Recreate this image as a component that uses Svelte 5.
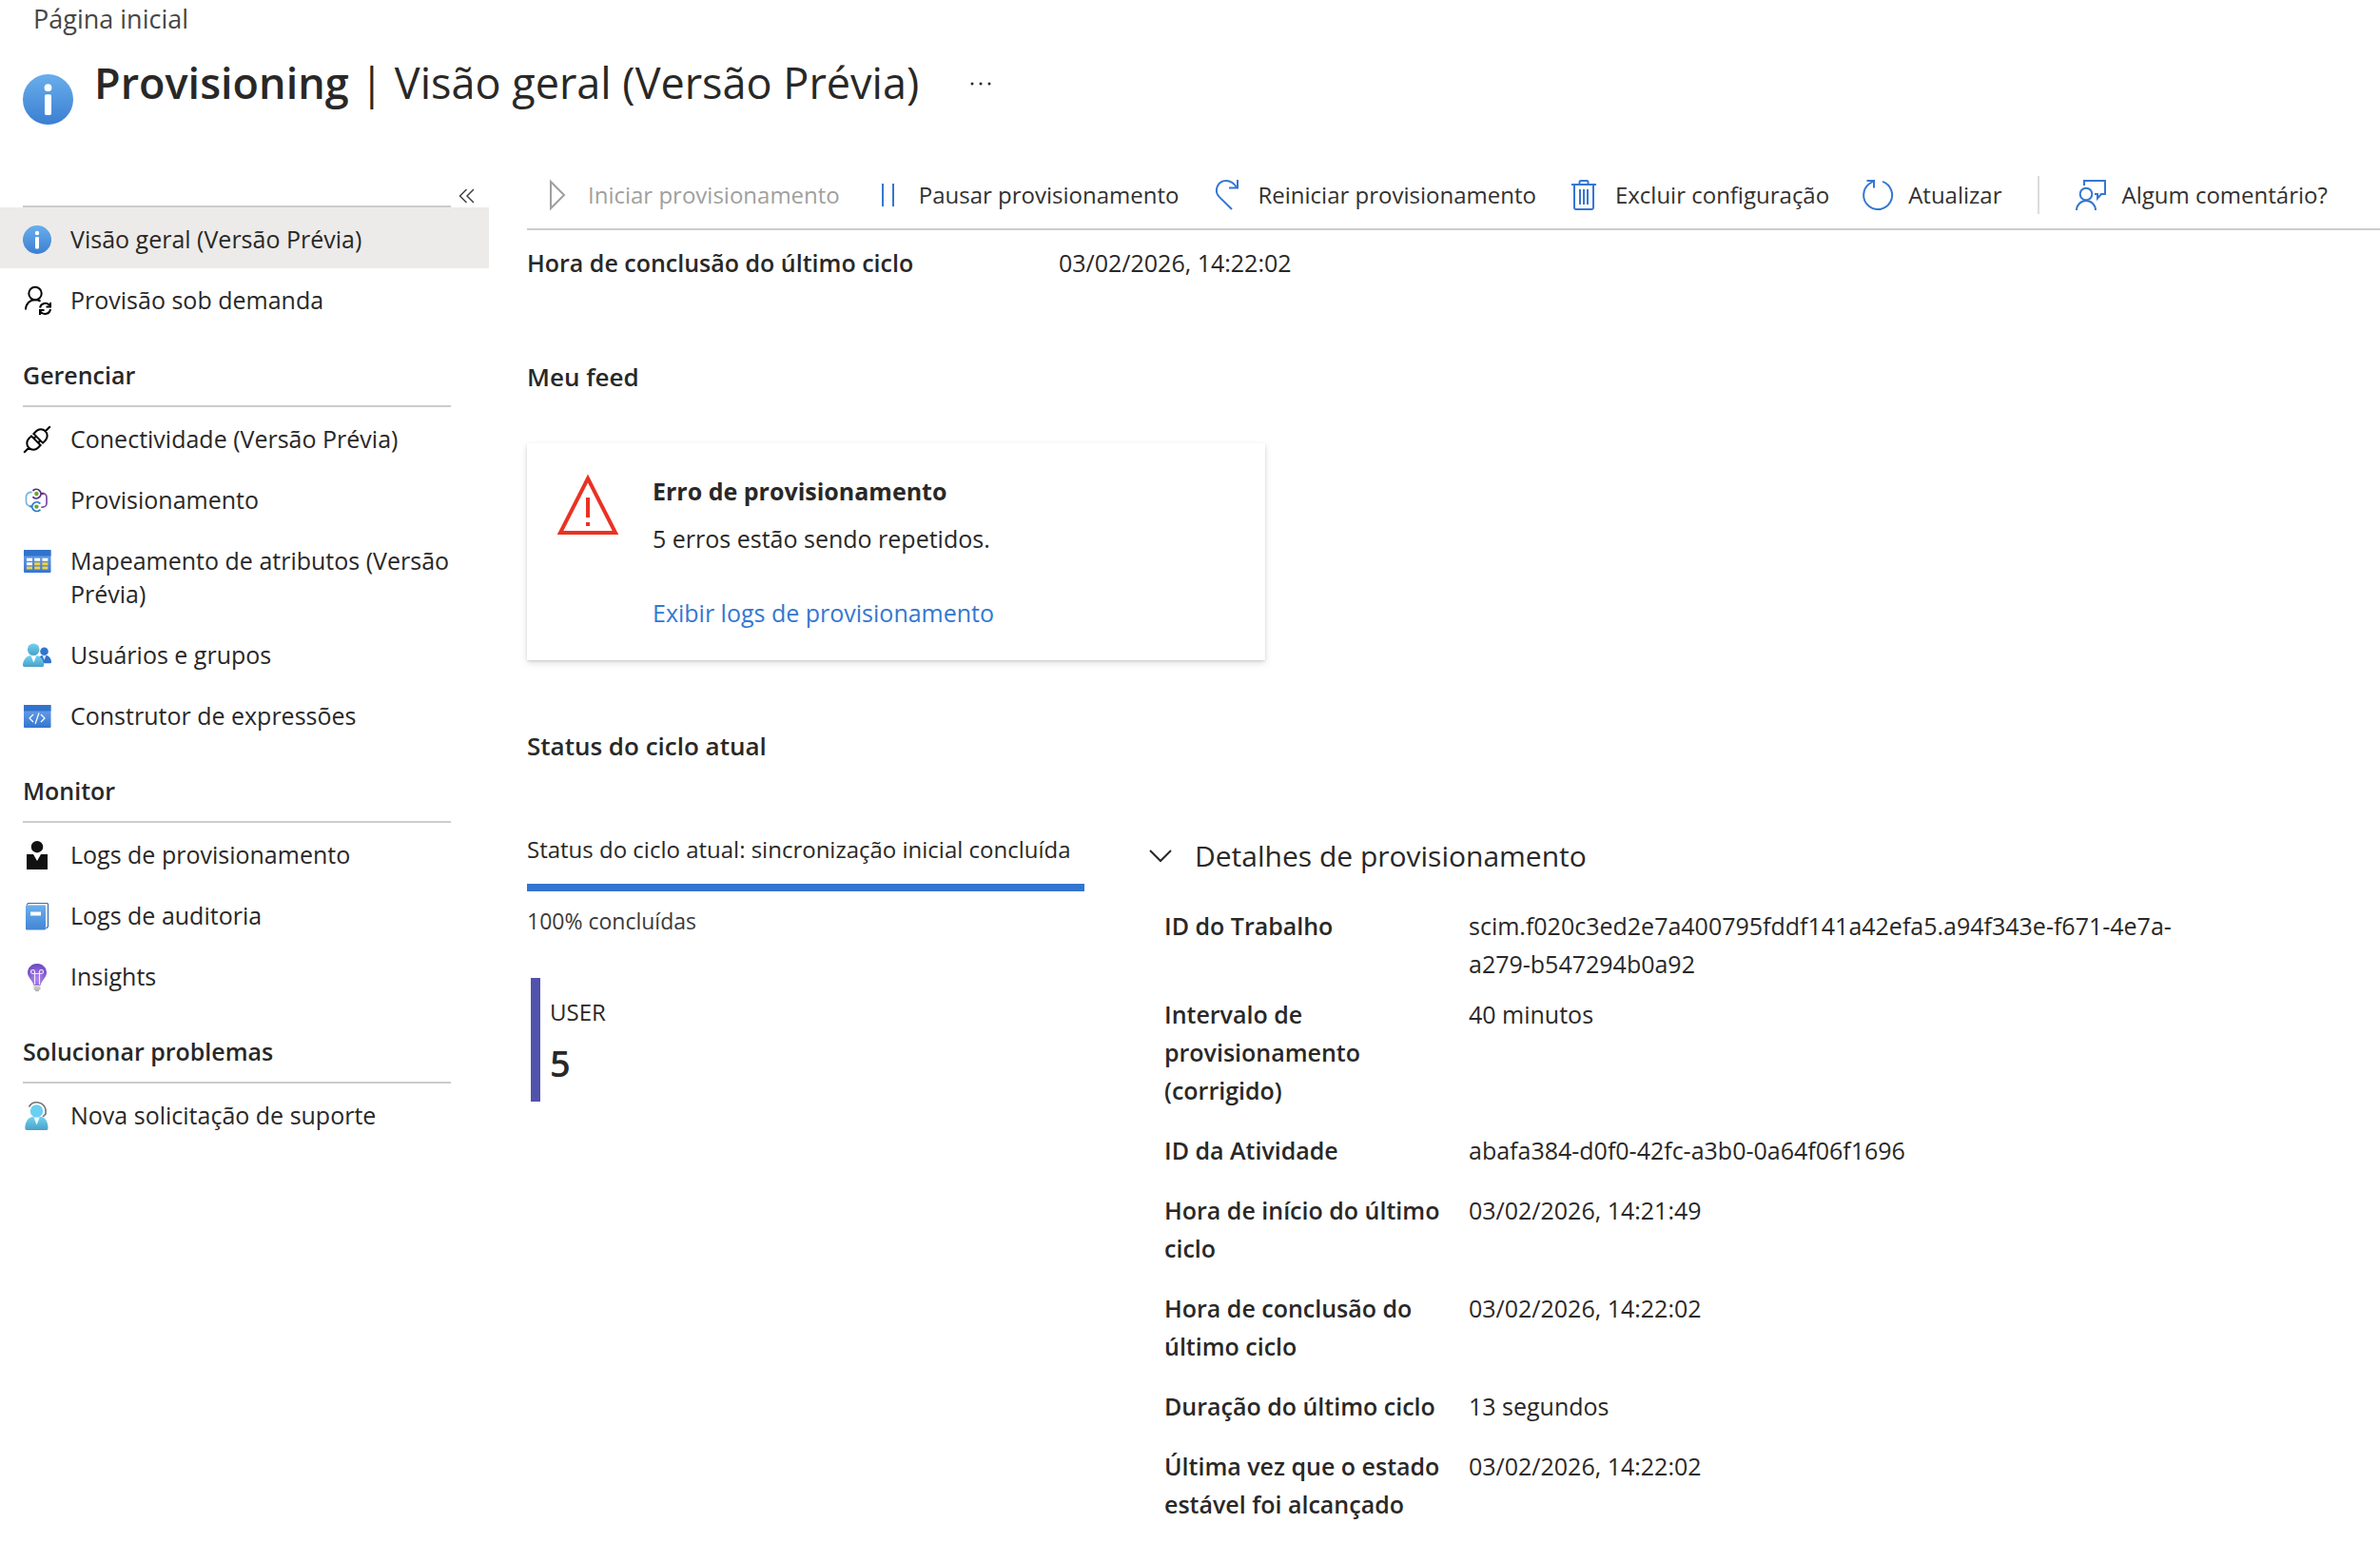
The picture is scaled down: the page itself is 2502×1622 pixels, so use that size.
<script>
  const groups = [
    {
      title: '',
      items: [
        { icon: 'info', label: 'Visão geral (Versão Prévia)', current: true },
        { icon: 'userSync', label: 'Provisão sob demanda' }
      ]
    },
    {
      title: 'Gerenciar',
      items: [
        { icon: 'plug', label: 'Conectividade (Versão Prévia)' },
        { icon: 'provision', label: 'Provisionamento' },
        { icon: 'table', label: 'Mapeamento de atributos (Versão Prévia)' },
        { icon: 'users', label: 'Usuários e grupos' },
        { icon: 'code', label: 'Construtor de expressões' }
      ]
    },
    {
      title: 'Monitor',
      items: [
        { icon: 'person', label: 'Logs de provisionamento' },
        { icon: 'book', label: 'Logs de auditoria' },
        { icon: 'bulb', label: 'Insights' }
      ]
    },
    {
      title: 'Solucionar problemas',
      items: [{ icon: 'support', label: 'Nova solicitação de suporte' }]
    }
  ];

  const details = [
    ['ID do Trabalho', 'scim.f020c3ed2e7a400795fddf141a42efa5.a94f343e-f671-4e7a-a279-b547294b0a92'],
    ['Intervalo de provisionamento (corrigido)', '40 minutos'],
    ['ID da Atividade', 'abafa384-d0f0-42fc-a3b0-0a64f06f1696'],
    ['Hora de início do último ciclo', '03/02/2026, 14:21:49'],
    ['Hora de conclusão do último ciclo', '03/02/2026, 14:22:02'],
    ['Duração do último ciclo', '13 segundos'],
    ['Última vez que o estado estável foi alcançado', '03/02/2026, 14:22:02']
  ];

  const progress = 100;
  let open = $state(true);
</script>

{#snippet infoIcon()}
  <svg viewBox="0 0 30 30" aria-hidden="true">
    <defs>
      <linearGradient id="info-fill" x1="0" y1="0" x2="0" y2="1">
        <stop offset="0" stop-color="#69aeec" />
        <stop offset="1" stop-color="#3b7fd1" />
      </linearGradient>
    </defs>
    <circle cx="15" cy="15" r="15" fill="url(#info-fill)" />
    <circle cx="15" cy="8" r="2.2" fill="#fff" />
    <rect x="13" y="12" width="4" height="12.4" rx="1" fill="#fff" />
  </svg>
{/snippet}

{#snippet navIcon(name)}
  {#if name === 'info'}
    {@render infoIcon()}
  {:else}
    <svg viewBox="0 0 30 30" aria-hidden="true">
      {#if name === 'userSync'}
        <g fill="none" stroke="#000" stroke-width="2">
          <circle cx="13" cy="7.5" r="6.7" />
          <path d="M3 24.5C3 18 7.500 14.200 13 14.200c2.200 0 4 .5 5.600 1.500" />
          <path d="M18 22.500a5.800 5.800 0 0 1 10.300-2.500M29 17v4.500h-4.500M29 24a5.800 5.800 0 0 1-10.500 2.500M18 30v-5h4.500" />
        </g>
      {:else if name === 'plug'}
        <g transform="rotate(-45 15 15)" fill="none" stroke="#000" stroke-width="2">
          <path d="M-4.500 15H3M27 15h7.500M13.300 8.200H9.500a6.800 6.800 0 0 0 0 13.600h3.800zM16.700 8.200h3.800a6.800 6.800 0 0 1 0 13.600h-3.800zM13.300 11.800h3.400M13.300 18.200h3.400" />
        </g>
      {:else if name === 'provision'}
        <g fill="none" stroke-width="1.800" stroke-linecap="round">
          <path stroke="#74b7e4" d="M9 6.500H8a4.500 4.500 0 0 0-4.500 4.500v5.500A4.500 4.500 0 0 0 8 21" />
          <path stroke="#8054ad" d="M21 7.500a4.200 4.200 0 0 1 4 4.200V18a4.200 4.200 0 0 1-4.200 4.200H20" />
          <path stroke="#5c2a83" d="M11 4.500a4.800 4.800 0 1 1 0 7.200M19 8h2" />
          <path stroke="#2f78cf" d="M17.800 18a4.800 4.800 0 1 0 0 7.200M9.500 21.500H8" />
        </g>
        <circle cx="14.400" cy="8" r="2.200" fill="#6ba42c" />
        <circle cx="14.400" cy="21.600" r="2.200" fill="#6ba42c" />
      {:else if name === 'table'}
        <defs>
          <linearGradient id="table-fill" x1="0" y1="0" x2="0" y2="1">
            <stop offset="0" stop-color="#75a7ee" />
            <stop offset="1" stop-color="#3375cf" />
          </linearGradient>
        </defs>
        <rect x="1" y="3" width="28.500" height="24" rx="1" fill="url(#table-fill)" />
        <path fill="#3173cb" d="M1 3h28.500v6.500H1z" />
        <path fill="#fff" d="M4 11.800h6v3H4zM12.200 11.800h6v3h-6zM20.400 11.800h6v3h-6zM4 16.200h6v3H4z" />
        <path fill="#f4d03f" d="M12.200 16.200h6v3h-6zM20.400 16.200h6v3h-6zM4 20.600h6v3H4zM12.200 20.600h6v3h-6zM20.400 20.600h6v3h-6z" />
      {:else if name === 'users'}
        <defs>
          <linearGradient id="users-fill" x1="0" y1="0" x2="0" y2="1">
            <stop offset="0" stop-color="#6fd3f3" />
            <stop offset="1" stop-color="#4b9fc6" />
          </linearGradient>
        </defs>
        <circle cx="22.500" cy="10.800" r="4.300" fill="#3274cc" />
        <path fill="#3274cc" d="M17 16.500l3-1.500h5c3 .5 5 4 5 7.300 0 .5-.5.900-1 .900H19z" />
        <path fill="#dbe9fa" d="M20.500 15h4l-2 5z" />
        <circle cx="11.200" cy="8.800" r="6.300" fill="url(#users-fill)" />
        <path fill="url(#users-fill)" d="M7 15.300h8.500c4 .7 6.700 6 6.700 10 0 1-.7 1.700-1.700 1.700H1.700C.7 27 0 26.300 0 25.300c0-4 3-9.300 7-10z" />
        <path fill="#fff" d="M8.400 15.300h6l-3 7.200z" />
      {:else if name === 'code'}
        <rect x="1" y="3" width="28.500" height="24" rx="1" fill="url(#table-fill)" />
        <path fill="#3173cb" d="M1 3h28.500v6.500H1z" />
        <path fill="none" stroke="#fff" stroke-width="1.200" d="M11 13l-4 4 4 4M19 13l4 4-4 4M17 11.500l-4 11.500" />
      {:else if name === 'person'}
        <circle cx="15" cy="6.200" r="6.200" fill="#111" />
        <path fill="#111" d="M4 14h7l4 7 4-7h7v16H4z" />
      {:else if name === 'book'}
        <defs>
          <linearGradient id="book-fill" x1="0" y1="0" x2="0" y2="1">
            <stop offset="0" stop-color="#6cb0ed" />
            <stop offset="1" stop-color="#4185d5" />
          </linearGradient>
        </defs>
        <path fill="#fff" stroke="#3a69a8" stroke-width="1.200" d="M4 3.500L5.500 1.500H25.500a1 1 0 0 1 1 1V26l-2 2" />
        <rect x="3" y="3.500" width="21" height="26" rx="1" fill="url(#book-fill)" />
        <path fill="#fff" d="M8 10.500h11v4H8z" />
      {:else if name === 'bulb'}
        <defs>
          <radialGradient id="bulb-fill" cx="0.500" cy="0.700" r="0.700">
            <stop offset="0" stop-color="#b086ee" />
            <stop offset="1" stop-color="#6a48c0" />
          </radialGradient>
        </defs>
        <path fill="url(#bulb-fill)" d="M25 10.500C25 5 20.500 1 15 1S5 5 5 10.500c0 5 5 7.500 6.300 13 .1.300.4.500.7.500h6c.3 0 .6-.2.700-.5C20 18 25 15.500 25 10.500z" />
        <path fill="none" stroke="#f3eafd" stroke-width="1.200" d="M12.500 23V11.500M17.500 23V11.500M9.500 11.500h11M12.500 11.500V9.200a2 2 0 1 0-2 2.300M17.500 11.500V9.200a2 2 0 1 1 2 2.300" />
        <path fill="#a3a3a3" d="M11.500 25h7v1.300h-7zM11.500 27h7v1.200h-7zM13 28.800h4v1.200h-4z" />
      {:else if name === 'support'}
        <path fill="none" stroke="#707070" stroke-width="1.600" d="M6.500 5.500A9.500 9.500 0 0 1 24 8.500v4.500l-3 3" />
        <circle cx="14.500" cy="10" r="6.700" fill="#69d0f2" />
        <path fill="url(#users-fill)" d="M10 16h9.500c4.500.8 7 6 7 12 0 1-.6 2-1.700 2H4c-1 0-1.700-1-1.700-2 0-6 3-11.200 7.700-12z" />
        <path fill="#e9f8fd" d="M11.400 16.500h6.400l-3.200 8z" />
      {/if}
    </svg>
  {/if}
{/snippet}

<div class="page">
  <nav class="breadcrumb" aria-label="Trilha"><a href="#inicio">Página inicial</a></nav>

  <header>
    <span class="big-icon">{@render infoIcon()}</span>
    <h1><strong>Provisioning</strong> | Visão geral (Versão Prévia)</h1>
    <button class="more" aria-label="Mais opções">
      <svg viewBox="0 0 24 4" aria-hidden="true"><circle cx="3" cy="2" r="1.500" /><circle cx="12" cy="2" r="1.500" /><circle cx="21" cy="2" r="1.500" /></svg>
    </button>
  </header>

  <div class="body">
    <aside>
      <div class="collapse">
        <span class="rule"></span>
        <button aria-label="Recolher menu">
          <svg viewBox="0 0 18 16" aria-hidden="true"><path d="M8.500 1l-7 7 7 7M16 1L9 8l7 7" /></svg>
        </button>
      </div>
      <nav aria-label="Menu">
        {#each groups as group}
          {#if group.title}<h2>{group.title}</h2>{/if}
          <ul>
            {#each group.items as item}
              <li>
                <a href="#menu" class:current={item.current} aria-current={item.current ? 'page' : undefined}>
                  <span class="nav-icon">{@render navIcon(item.icon)}</span>
                  <span>{item.label}</span>
                </a>
              </li>
            {/each}
          </ul>
        {/each}
      </nav>
    </aside>

    <main>
      <div class="toolbar" role="toolbar" aria-label="Comandos">
        <button disabled>
          <svg viewBox="0 0 32 32" aria-hidden="true"><path d="M9 2v28l14-14z" /></svg>
          Iniciar provisionamento
        </button>
        <button>
          <svg viewBox="0 0 32 32" aria-hidden="true"><path d="M10 4v24M21 4v24" /></svg>
          Pausar provisionamento
        </button>
        <button>
          <svg viewBox="0 0 32 32" aria-hidden="true"><path d="M27 0v8.500h-9M26.500 8.500C23.500 3.800 19.500 1 15 1A10 10 0 0 0 7.900 18.100L21 31" /></svg>
          Reiniciar provisionamento
        </button>
        <button>
          <svg viewBox="0 0 32 32" aria-hidden="true"><path d="M2 5h26M10.500 5V2.500q0-1.500 1.500-1.500h6q1.500 0 1.500 1.500V5M5 5v24q0 2 2 2h16q2 0 2-2V5M11 10v16M15 10v16M19 10v16" /></svg>
          Excluir configuração
        </button>
        <button>
          <svg viewBox="0 0 32 32" aria-hidden="true"><path d="M21 1.900A15 15 0 1 1 7 4.200L12 1M4.500 1H12v7.500" /></svg>
          Atualizar
        </button>
        <span class="divider"></span>
        <button>
          <svg viewBox="0 0 32 32" aria-hidden="true"><path d="M9 6V1h22v14h-4l-4 4.500V15h-3M1 32a10 10 0 0 1 20 0" /><circle cx="11" cy="15" r="6.300" /></svg>
          Algum comentário?
        </button>
      </div>

      <dl class="summary">
        <dt>Hora de conclusão do último ciclo</dt>
        <dd>03/02/2026, 14:22:02</dd>
      </dl>

      <h3>Meu feed</h3>
      <section class="card">
        <svg class="warning" viewBox="0 0 64 64" aria-hidden="true">
          <path fill="none" stroke="#e93223" stroke-width="4" d="M32 5L61 62H3z" />
          <path fill="#e93223" d="M30 25h4v21h-4zM30 51h4v4h-4z" />
        </svg>
        <div>
          <h4>Erro de provisionamento</h4>
          <p>5 erros estão sendo repetidos.</p>
          <a href="#logs">Exibir logs de provisionamento</a>
        </div>
      </section>

      <h3 class="status-title">Status do ciclo atual</h3>
      <div class="status">
        <section class="cycle">
          <p id="cycle-label">Status do ciclo atual: sincronização inicial concluída</p>
          <div class="track" role="progressbar" aria-labelledby="cycle-label" aria-valuenow={progress} aria-valuemin="0" aria-valuemax="100">
            <div class="bar" style="width: {progress}%"></div>
          </div>
          <p class="percent">{progress}% concluídas</p>
          <div class="count">
            <span>USER</span>
            <strong>5</strong>
          </div>
        </section>

        <section class="details">
          <button class="toggle" aria-expanded={open} onclick={() => (open = !open)}>
            <svg viewBox="0 0 24 14" aria-hidden="true"><path d="M1 1l11 11L23 1" /></svg>
            Detalhes de provisionamento
          </button>
          {#if open}
            <dl>
              {#each details as [label, value]}
                <dt>{label}</dt>
                <dd>{value}</dd>
              {/each}
            </dl>
          {/if}
        </section>
      </div>
    </main>
  </div>
</div>

<style>
  :global(body) { margin: 0; background: #fff; }
  .page {
    font-family: "Segoe UI", "Open Sans", "Noto Sans", sans-serif;
    font-size: 25px;
    line-height: 40px;
    color: #292827;
  }
  h1, h2, h3, h4, p, ul, dl, dd { margin: 0; padding: 0; }
  ul { list-style: none; }
  a { color: inherit; text-decoration: none; }
  button {
    font: inherit;
    color: inherit;
    background: none;
    border: 0;
    margin: 0;
    padding: 0;
    cursor: pointer;
  }
  svg { display: block; overflow: visible; }

  .breadcrumb { padding-left: 35px; font-size: 27px; line-height: 40px; color: #484644; }

  header { display: flex; align-items: flex-start; padding: 16px 24px 39px; }
  .big-icon { width: 53px; margin: 22px 22px 0 0; }
  h1 { font-size: 45px; line-height: 62px; font-weight: 400; }
  h1 strong { font-weight: 600; }
  .more { display: flex; align-items: center; height: 64px; margin-left: 53px; }
  .more svg { width: 24px; fill: #292827; }

  .body { display: flex; gap: 40px; }
  aside { flex: 0 0 514px; }
  main { flex: 1; min-width: 0; }

  .collapse { display: flex; align-items: flex-end; gap: 8px; height: 48px; padding-left: 24px; }
  .rule { width: 450px; height: 2px; background: #ccc; }
  .collapse svg { width: 18px; padding-bottom: 4px; fill: none; stroke: #444; stroke-width: 1.5; }

  h2 {
    width: 450px;
    margin-left: 24px;
    padding: 31px 0 14px;
    border-bottom: 2px solid #ccc;
    font-size: 25px;
    line-height: 35px;
    font-weight: 600;
  }
  li a { display: flex; gap: 20px; padding: 16px 39px 13px 24px; line-height: 35px; }
  .current { background: #ecebe9; }
  .nav-icon { flex: 0 0 30px; padding-top: 3px; }
  .nav-icon :global(svg) { width: 30px; height: 30px; }

  .toolbar {
    display: flex;
    align-items: center;
    height: 70px;
    border-bottom: 2px solid #ccc;
    font-size: 24px;
    color: #323130;
    white-space: nowrap;
  }
  .toolbar button { display: flex; align-items: center; gap: 16px; padding: 0 19px 0 16px; }
  .toolbar svg { width: 32px; height: 32px; fill: none; stroke: #3477d1; stroke-width: 2; }
  .toolbar button:disabled { color: #a19f9d; cursor: default; }
  .toolbar button:disabled svg { stroke: #a19f9d; }
  .divider { width: 2px; height: 40px; margin: 0 22px 0 19px; background: #dcdcdc; }

  .summary { display: flex; padding-top: 14px; }
  .summary dt { flex: 0 0 559px; }
  dt { font-weight: 600; }

  h3 { margin-top: 80px; font-size: 26px; font-weight: 600; }
  .card {
    display: flex;
    gap: 36px;
    max-width: 614px;
    margin-top: 50px;
    padding: 30px 130px 30px 32px;
    box-shadow: 0 3px 7px rgba(0, 0, 0, 0.13), 0 1px 2px rgba(0, 0, 0, 0.11);
  }
  .warning { flex: 0 0 64px; height: 64px; margin-top: 2px; }
  h4 { font-size: 25px; font-weight: 700; }
  .card p { margin: 10px 0 38px; }
  .card a { display: block; color: #3477d1; }

  .status-title { margin-top: 70px; }
  .status { display: flex; gap: 68px; margin-top: 69px; }
  .cycle { flex: 0 0 586px; white-space: nowrap; }
  .cycle > p { font-size: 24px; }
  .track { height: 8px; margin-top: 16px; background: #edebe9; }
  .bar { height: 8px; background: #3375cf; }
  .cycle .percent { margin-top: 11px; font-size: 23px; color: #3b3a39; }
  .count {
    display: flex;
    flex-direction: column;
    gap: 10px;
    margin: 40px 0 0 4px;
    padding: 20px 0 14px 10px;
    border-left: 10px solid #5152ab;
    font-size: 24px;
    line-height: 32px;
  }
  .count strong { font-size: 38px; line-height: 54px; font-weight: 600; }

  .details { flex: 1; padding-top: 7px; }
  .toggle { display: flex; align-items: center; gap: 24px; font-size: 30px; }
  .toggle svg { width: 24px; fill: none; stroke: #292827; stroke-width: 2; }
  .details dl {
    display: grid;
    grid-template-columns: 300px 1fr;
    column-gap: 20px;
    max-width: 1080px;
    padding: 33px 0 0 16px;
  }
  .details dt { margin-bottom: 23px; }
  .details dd { margin-bottom: 13px; }
</style>
